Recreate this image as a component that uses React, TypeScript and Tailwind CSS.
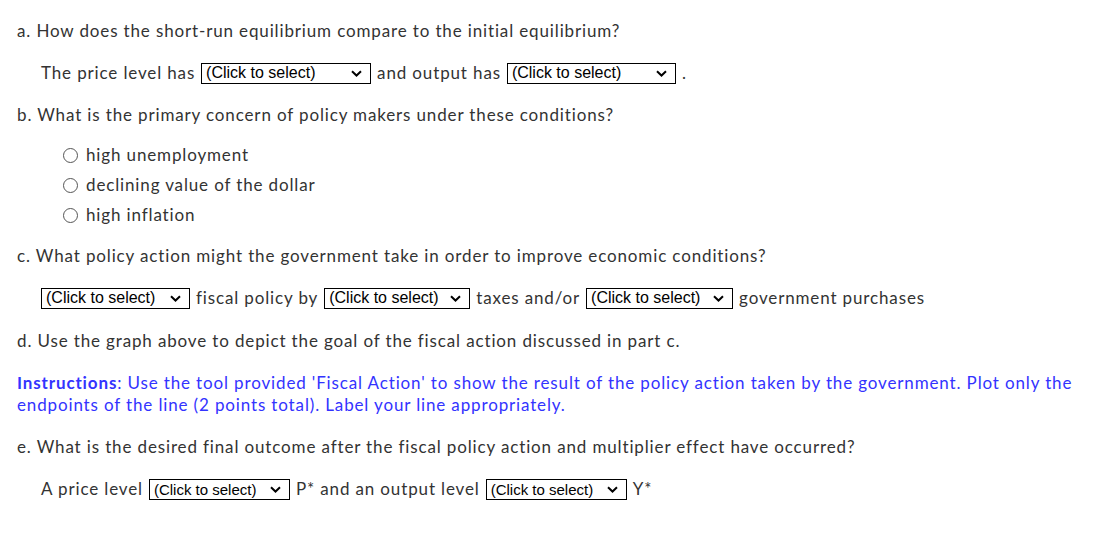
import { useState } from 'react';

function Chevron() {
  return (
    <svg width="11" height="7" viewBox="0 0 11 7" className="shrink-0">
      <path d="M1 1.2 L5.5 5.5 L10 1.2" fill="none" stroke="#000" strokeWidth="2" />
    </svg>
  );
}

function Picker({ width, small }: { width: string; small?: boolean }) {
  return (
    <span
      className={`mx-[6px] inline-flex h-[21px] items-center justify-between border border-black bg-white pl-[4px] pr-[8px] align-middle font-['Liberation_Sans',Arial,sans-serif] tracking-normal text-black ${width} ${
        small ? 'text-[15px]' : 'text-[16px]'
      }`}
    >
      <span className="leading-none">(Click to select)</span>
      <Chevron />
    </span>
  );
}

function Radio({ label }: { label: string }) {
  const [on, setOn] = useState(false);
  return (
    <label className="flex h-[22px] cursor-pointer items-center gap-[8px]" onClick={() => setOn(!on)}>
      <span className="flex size-[15px] items-center justify-center rounded-full border border-[#555]">
        {on && <span className="size-[7px] rounded-full bg-[#333]" />}
      </span>
      <span>{label}</span>
    </label>
  );
}

export default function App() {
  return (
    <div className="min-h-[552px] bg-white px-[17px] pt-[20px] font-['Lato',sans-serif] text-[17px] leading-[22px] tracking-[0.86px] text-[#333]">
      <p>a. How does the short-run equilibrium compare to the initial equilibrium?</p>
      <div className="mt-[20px] flex h-[22px] items-center pl-[24px]">
        The price level has
        <Picker width="w-[170px]" />
        and output has
        <Picker width="w-[169px]" />.
      </div>

      <p className="mt-[20px]">b. What is the primary concern of policy makers under these conditions?</p>
      <div className="mt-[18px] flex flex-col gap-[8px] pl-[46px]">
        <Radio label="high unemployment" />
        <Radio label="declining value of the dollar" />
        <Radio label="high inflation" />
      </div>

      <p className="mt-[19px]">c. What policy action might the government take in order to improve economic conditions?</p>
      <div className="mt-[20px] flex h-[22px] items-center pl-[18px]">
        <Picker width="w-[149px]" />
        fiscal policy by
        <Picker width="w-[146px]" />
        taxes and/or
        <Picker width="w-[147px]" />
        government purchases
      </div>

      <p className="mt-[21px]">d. Use the graph above to depict the goal of the fiscal action discussed in part c.</p>
      <p className="mt-[20px] text-[#3333ff]">
        <span className="font-bold">Instructions</span>: Use the tool provided 'Fiscal Action' to show the result of the
        policy action taken by the government. Plot only the
        <br />
        endpoints of the line (2 points total). Label your line appropriately.
      </p>

      <p className="mt-[20px]">e. What is the desired final outcome after the fiscal policy action and multiplier effect have occurred?</p>
      <div className="mt-[20px] flex h-[22px] items-center pl-[24px]">
        A price level
        <Picker width="w-[141px]" small />
        P* and an output level
        <Picker width="w-[141px]" small />
        Y*
      </div>
    </div>
  );
}
